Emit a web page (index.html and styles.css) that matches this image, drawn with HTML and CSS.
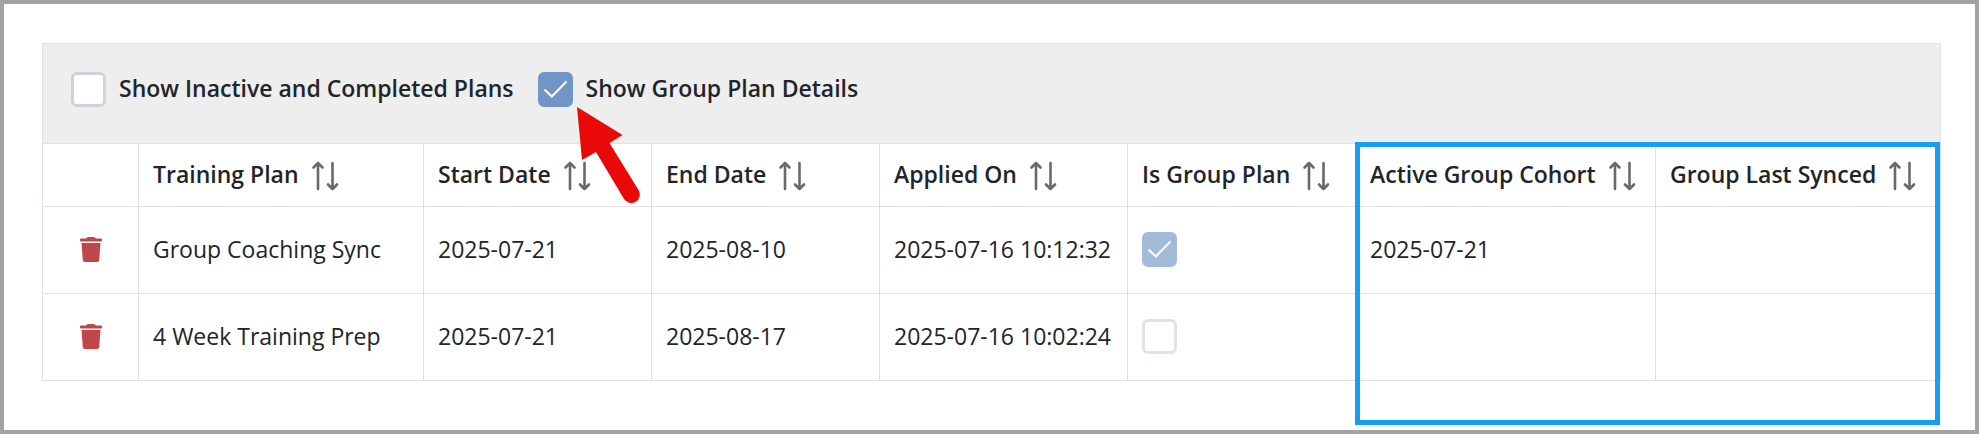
FILE: index.html
```html
<!DOCTYPE html>
<html lang="en">
<head>
    <meta charset="UTF-8">
    <meta name="viewport" content="width=device-width, initial-scale=1.0">
    <title>Training Plans</title>
    <link rel="stylesheet" href="styles.css">
</head>
<body>
    <svg class="sprite" aria-hidden="true">
        <symbol id="icon-sort" viewBox="0 0 28 30">
            <path d="M2.5 6.5 7 2l4.5 4.5M7 2v26M17 23.500l4.500 4.500 4.500-4.500M21.500 28V2" fill="none" stroke="currentColor" stroke-width="2.6" stroke-linecap="round" stroke-linejoin="round"/>
        </symbol>
        <symbol id="icon-trash" viewBox="0 0 22 25">
            <path d="M1.200 1.600H6L7 .6Q7.500 0 8.400 0h5.200q.9 0 1.400.6l1 1h4.800Q22 1.600 22 2.800v.8q0 1-1.200 1H1.200Q0 4.600 0 3.600v-.8q0-1.200 1.200-1.200zM1.500 6h19l-1.300 17q-.2 2-2 2H4.800q-1.800 0-2-2z" fill="currentColor"/>
        </symbol>
    </svg>

    <main class="page">
        <section class="plans">
            <div class="toolbar">
                <label class="option">
                    <input type="checkbox" class="checkbox">
                    <span>Show Inactive and Completed Plans</span>
                </label>
                <label class="option">
                    <input type="checkbox" class="checkbox" checked>
                    <span>Show Group Plan Details</span>
                    <svg class="pointer" viewBox="0 0 64 98" aria-hidden="true">
                        <path d="M0 0 45.500 28 32.500 36 61.500 83A8.500 8.500 0 0 1 47 92L19 45 5 53z" fill="#e90909"/>
                    </svg>
                </label>
            </div>

            <div class="table-wrap">
                <table class="plan-table">
                    <colgroup>
                        <col class="col-action">
                        <col class="col-plan">
                        <col class="col-date">
                        <col class="col-date">
                        <col class="col-applied">
                        <col class="col-date">
                        <col class="col-cohort">
                        <col class="col-plan">
                    </colgroup>
                    <thead>
                        <tr>
                            <th></th>
                            <th><button class="sort">Training Plan <svg><use href="#icon-sort"/></svg></button></th>
                            <th><button class="sort">Start Date <svg><use href="#icon-sort"/></svg></button></th>
                            <th><button class="sort">End Date <svg><use href="#icon-sort"/></svg></button></th>
                            <th><button class="sort">Applied On <svg><use href="#icon-sort"/></svg></button></th>
                            <th><button class="sort">Is Group Plan <svg><use href="#icon-sort"/></svg></button></th>
                            <th><button class="sort">Active Group Cohort <svg><use href="#icon-sort"/></svg></button></th>
                            <th><button class="sort">Group Last Synced <svg><use href="#icon-sort"/></svg></button></th>
                        </tr>
                    </thead>
                    <tbody>
                        <tr>
                            <td><button class="delete" aria-label="Delete plan"><svg><use href="#icon-trash"/></svg></button></td>
                            <td>Group Coaching Sync</td>
                            <td>2025-07-21</td>
                            <td>2025-08-10</td>
                            <td>2025-07-16 10:12:32</td>
                            <td><input type="checkbox" class="checkbox" aria-label="Is group plan" checked disabled></td>
                            <td>2025-07-21</td>
                            <td></td>
                        </tr>
                        <tr>
                            <td><button class="delete" aria-label="Delete plan"><svg><use href="#icon-trash"/></svg></button></td>
                            <td>4 Week Training Prep</td>
                            <td>2025-07-21</td>
                            <td>2025-08-17</td>
                            <td>2025-07-16 10:02:24</td>
                            <td><input type="checkbox" class="checkbox" aria-label="Is group plan" disabled></td>
                            <td></td>
                            <td></td>
                        </tr>
                    </tbody>
                </table>
                <div class="highlight"></div>
            </div>
        </section>
    </main>
</body>
</html>
```
FILE: styles.css
```css
:root {
    --border: #dee2e6;
    --text: #212529;
    --primary: #7096c8;
    --danger: #c0464a;
    --highlight: #189df5;
}

* {
    box-sizing: border-box;
    margin: 0;
    padding: 0;
}

body {
    font-family: "Open Sans", "Noto Sans", sans-serif;
    font-size: 23px;
    line-height: 32px;
    color: var(--text);
    background: white;
}

.sprite {
    display: none;
}

.page {
    min-height: 100vh;
    padding: 39px 34px 39px 38px;
    border: 4px solid #a4a3a3;
}

.toolbar {
    display: flex;
    gap: 24px;
    padding: 28px 28px 36px;
    background: #eeeeee;
    border: 1px solid var(--border);
    border-bottom: none;
}

.option {
    position: relative;
    display: flex;
    align-items: center;
    gap: 13px;
    font-weight: 600;
    cursor: pointer;
}

.option span {
    padding-bottom: 3px;
}

.checkbox {
    appearance: none;
    display: block;
    flex: none;
    width: 35px;
    height: 35px;
    background: white;
    border: 3px solid #ced3da;
    border-radius: 6px;
}

.checkbox:checked {
    border-color: var(--primary);
    background: var(--primary) url("data:image/svg+xml,%3Csvg xmlns='http://www.w3.org/2000/svg' viewBox='0 0 35 35'%3E%3Cpath d='M6.500 17.500l7.300 7L28.500 9.500' fill='none' stroke='white' stroke-width='2'/%3E%3C/svg%3E") center / 35px 35px no-repeat;
}

.checkbox:disabled {
    opacity: 0.64;
}

.pointer {
    position: absolute;
    top: 35px;
    left: 39px;
    z-index: 2;
    width: 64px;
    height: 98px;
}

.table-wrap {
    position: relative;
}

.plan-table {
    width: 100%;
    table-layout: fixed;
    border-collapse: collapse;
}

.col-action { width: 96px; }
.col-plan { width: 285px; }
.col-date { width: 228px; }
.col-applied { width: 248px; }
.col-cohort { width: 300px; }

.plan-table th,
.plan-table td {
    padding: 0 14px 2px;
    border: 1px solid var(--border);
    text-align: left;
    white-space: nowrap;
}

.plan-table th {
    height: 63px;
}

.plan-table td {
    height: 87px;
}

.sort,
.delete {
    font: inherit;
    color: inherit;
    background: none;
    border: none;
    cursor: pointer;
}

.sort {
    display: flex;
    align-items: center;
    gap: 12px;
    font-weight: 600;
}

.sort svg {
    width: 28px;
    height: 30px;
    margin-top: 4px;
    color: #696969;
}

.delete {
    display: block;
    margin: 0 auto;
    color: var(--danger);
}

.delete svg {
    display: block;
    width: 22px;
    height: 25px;
}

/* frame around the two group columns */
.highlight {
    position: absolute;
    top: -1px;
    right: 1px;
    bottom: -44px;
    width: 30.8%;
    border: 5px solid var(--highlight);
    pointer-events: none;
}
```
